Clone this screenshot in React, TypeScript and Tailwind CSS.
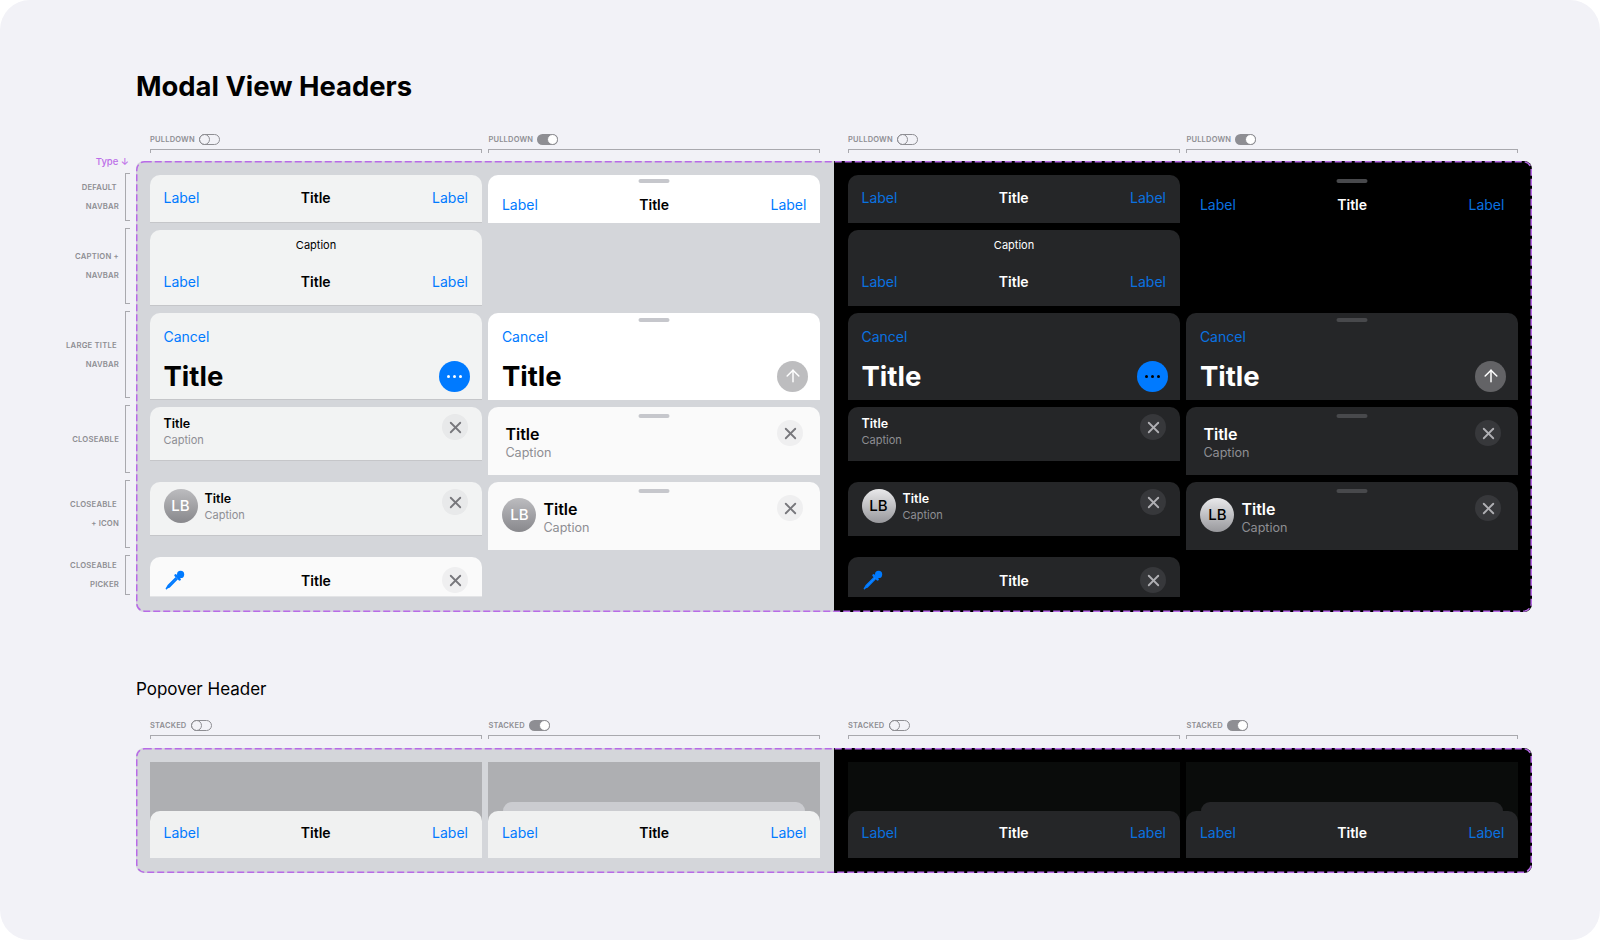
import { ArrowUp, X } from "lucide-react";
import type { ReactNode } from "react";

const rowLabels = [
  { lines: ["DEFAULT ", "NAVBAR"], box: "h-[48px]" },
  { lines: ["CAPTION +", "NAVBAR"], box: "h-[76px]" },
  { lines: ["LARGE TITLE ", "NAVBAR"], box: "h-[87px]" },
  { lines: ["CLOSEABLE"], box: "h-[68px]" },
  { lines: ["CLOSEABLE ", "+ ICON"], box: "h-[68px]" },
  { lines: ["CLOSEABLE ", "PICKER"], box: "h-[40px]" },
];

const theme = (dark: boolean) => ({
  flat: dark ? "bg-[#252628]" : "bg-[#f2f3f3] border-b border-[#c5c6c9]",
  white: dark ? "bg-[#252628]" : "bg-white",
  soft: dark ? "bg-[#252628]" : "bg-[#fafafa]",
  picker: dark ? "bg-[#252628]" : "bg-[#fafafa] border-b border-[#e3e4e6]",
  plain: dark ? "bg-black" : "bg-white",
  link: dark ? "text-[#0a72e0]" : "text-[#007aff]",
  title: dark ? "text-white" : "text-black",
  caption: "text-[#8e8e93]",
  grabber: dark ? "bg-[#48494c]" : "bg-[#c6c7cc]",
  close: dark ? "bg-[#37383b] text-[#b0b0b4]" : "bg-[#78788014] text-[#77777c]",
  arrow: dark ? "bg-[#636366]" : "bg-[#bdbdbf]",
  dots: dark ? "bg-black" : "bg-white",
  avatar: dark
    ? "bg-[linear-gradient(180deg,#e9e9eb,#98989c)] text-black"
    : "bg-[linear-gradient(180deg,#bcbcbf,#88888c)] text-white",
});

type Tone = ReturnType<typeof theme>;

const Toggle = ({ on }: { on?: boolean }) =>
  on ? (
    <span className="flex h-[11px] w-[21px] justify-end rounded-full bg-[#8e8e93]">
      <span className="h-[11px] w-[11px] rounded-full border border-[#8e8e93] bg-white" />
    </span>
  ) : (
    <span className="flex h-[11px] w-[21px] rounded-full border border-[#8e8e93]">
      <span className="-my-px -ml-px h-[11px] w-[11px] rounded-full border border-[#8e8e93]" />
    </span>
  );

const ColumnHead = ({ label, on }: { label: string; on?: boolean }) => (
  <div>
    <div className="flex h-[11px] items-center gap-[4px]">
      <span className="text-[7.5px] font-semibold tracking-[0.2px] text-[#8e8e93]">{label}</span>
      <Toggle on={on} />
    </div>
    <div className="mt-[4px] h-[4px] border-x border-t border-[#a9a9ae]" />
  </div>
);

const ColumnHeads = ({ label }: { label: string }) => (
  <div className="flex">
    {[0, 1].map((half) => (
      <div key={half} className="grid w-[698px] grid-cols-[332px_332px] gap-x-[6.4px] px-[14px]">
        <ColumnHead label={label} />
        <ColumnHead label={label} on />
      </div>
    ))}
  </div>
);

const Grabber = ({ tone, top }: { tone: Tone; top: string }) => (
  <div className={`absolute left-1/2 h-[4px] w-[31px] -translate-x-1/2 rounded-full ${top} ${tone.grabber}`} />
);

const Close = ({ tone, place }: { tone: Tone; place: string }) => (
  <button className={`absolute flex h-[26px] w-[26px] items-center justify-center rounded-full ${place} ${tone.close}`}>
    <X size={19} strokeWidth={2.3} />
  </button>
);

const NavRow = ({ tone, pad }: { tone: Tone; pad?: string }) => (
  <div className={`grid grid-cols-3 items-center pl-[13.5px] pr-[14px] text-[14px] leading-[20px] ${pad ?? ""}`}>
    <span className={tone.link}>Label</span>
    <span className={`text-center font-semibold ${tone.title}`}>Title</span>
    <span className={`text-right ${tone.link}`}>Label</span>
  </div>
);

const Card = ({ className, children }: { className: string; children: ReactNode }) => (
  <div className={`relative self-start rounded-t-[10px] ${className}`}>{children}</div>
);

const Avatar = ({ tone }: { tone: Tone }) => (
  <div className={`flex h-[34px] w-[34px] shrink-0 items-center justify-center rounded-full text-[15px] font-medium ${tone.avatar}`}>
    LB
  </div>
);

const Dropper = () => (
  <svg width="20" height="20" viewBox="0 0 20 20" className="text-[#007aff]">
    <circle cx="15.6" cy="4.4" r="3.6" fill="currentColor" />
    <path d="M10.6 5.4l4 4" stroke="currentColor" strokeWidth="2.6" strokeLinecap="round" />
    <path d="M11.2 7.6L3.4 15.4c-.6.6-1 2-2 3.2 1.2-1 2.6-1.4 3.2-2l7.8-7.8" fill="#78b4ff" stroke="currentColor" strokeWidth="1.5" strokeLinejoin="round" />
  </svg>
);

const Panel = ({ dark }: { dark: boolean }) => {
  const tone = theme(dark);
  return (
    <div className="grid h-[436px] grid-cols-[332px_332px] grid-rows-[48px_76px_87px_68px_68px_40px] gap-x-[6.4px] gap-y-[7px]">
      {/* default navbar */}
      <Card className={`h-[48px] pt-[13px] ${tone.flat}`}>
        <NavRow tone={tone} />
      </Card>
      <Card className={`h-[48px] pt-[20px] ${tone.plain}`}>
        <Grabber tone={tone} top="top-[4px]" />
        <NavRow tone={tone} />
      </Card>

      {/* caption + navbar */}
      <Card className={`h-[76px] pt-[8px] ${tone.flat}`}>
        <p className={`text-center text-[11px] leading-[14px] ${tone.title}`}>Caption</p>
        <NavRow tone={tone} pad="mt-[20px]" />
      </Card>
      <div />

      {/* large title */}
      {[false, true].map((pulldown) => (
        <Card key={String(pulldown)} className={`h-[87px] pt-[14px] ${pulldown ? tone.white : tone.flat}`}>
          {pulldown && <Grabber tone={tone} top="top-[5px]" />}
          <p className={`pl-[13.5px] text-[14px] leading-[20px] ${tone.link}`}>Cancel</p>
          <div className="mt-[11px] flex items-center justify-between pl-[13.5px] pr-[12px]">
            <span className={`text-[27.5px] font-bold leading-[36px] ${tone.title}`}>Title</span>
            {pulldown ? (
              <span className={`flex h-[31px] w-[31px] items-center justify-center rounded-full text-white ${tone.arrow}`}>
                <ArrowUp size={20} strokeWidth={1.8} />
              </span>
            ) : (
              <span className="flex h-[31px] w-[31px] items-center justify-center gap-[3px] rounded-full bg-[#007aff]">
                <i className={`h-[3px] w-[3px] rounded-full ${tone.dots}`} />
                <i className={`h-[3px] w-[3px] rounded-full ${tone.dots}`} />
                <i className={`h-[3px] w-[3px] rounded-full ${tone.dots}`} />
              </span>
            )}
          </div>
        </Card>
      ))}

      {/* closeable */}
      <Card className={`h-[54px] pl-[13.5px] pt-[8px] ${tone.flat}`}>
        <Close tone={tone} place="right-[14px] top-[7px]" />
        <p className={`text-[12.5px] font-semibold leading-[18px] ${tone.title}`}>Title</p>
        <p className={`text-[11px] leading-[15px] ${tone.caption}`}>Caption</p>
      </Card>
      <Card className={`h-[68px] pl-[17px] pt-[16px] ${tone.soft}`}>
        <Grabber tone={tone} top="top-[7px]" />
        <Close tone={tone} place="right-[17px] top-[13px]" />
        <p className={`text-[16px] font-semibold leading-[22px] ${tone.title}`}>Title</p>
        <p className={`text-[12.6px] leading-[16px] ${tone.caption}`}>Caption</p>
      </Card>

      {/* closeable + icon */}
      <Card className={`flex h-[54px] gap-[7px] pl-[13.5px] pt-[7px] ${tone.flat}`}>
        <Close tone={tone} place="right-[14px] top-[7px]" />
        <Avatar tone={tone} />
        <div className="mt-[1px]">
          <p className={`text-[12.5px] font-semibold leading-[18px] ${tone.title}`}>Title</p>
          <p className={`text-[11px] leading-[15px] ${tone.caption}`}>Caption</p>
        </div>
      </Card>
      <Card className={`flex h-[68px] gap-[7px] pl-[14px] pt-[16px] ${tone.soft}`}>
        <Grabber tone={tone} top="top-[7px]" />
        <Close tone={tone} place="right-[17px] top-[13px]" />
        <Avatar tone={tone} />
        <div>
          <p className={`text-[16px] font-semibold leading-[22px] ${tone.title}`}>Title</p>
          <p className={`text-[12.6px] leading-[15px] ${tone.caption}`}>Caption</p>
        </div>
      </Card>

      {/* closeable picker */}
      <Card className={`flex h-[40px] items-center justify-center pt-[7px] ${tone.picker}`}>
        <div className="absolute left-[15px] top-[13px]">
          <Dropper />
        </div>
        <span className={`text-[14px] font-semibold ${tone.title}`}>Title</span>
        <Close tone={tone} place="right-[14px] top-[10px]" />
      </Card>
    </div>
  );
};

const PopoverCell = ({ dark, stacked }: { dark: boolean; stacked?: boolean }) => {
  const tone = theme(dark);
  return (
    <div className={`flex h-[96px] flex-col justify-end ${dark ? "bg-[#0a0c0b]" : "bg-[#aeafb2]"}`}>
      {stacked && <div className={`mx-[15px] h-[9px] rounded-t-[10px] ${dark ? "bg-[#252628]" : "bg-[#cbccd0]"}`} />}
      <div className={`h-[47px] rounded-t-[10px] pt-[12px] ${dark ? "bg-[#252628]" : "bg-[#f0f1f1]"}`}>
        <NavRow tone={tone} />
      </div>
    </div>
  );
};

const Dashes = ({ height }: { height: number }) => (
  <svg className="pointer-events-none absolute inset-0" width="1396" height={height} fill="none">
    <rect x="0.75" y="0.75" width="1394.5" height={height - 1.5} rx="8" stroke="#b86ae8" strokeWidth="1.5" strokeDasharray="7 3" />
  </svg>
);

export default function App() {
  return (
    <div className="h-[940px] w-[1600px] overflow-hidden bg-white [font-family:Inter,sans-serif]">
      <div className="h-[940px] rounded-[30px] bg-[#f2f2f7] pt-[69px]">
        <h1 className="pl-[136px] text-[27.4px] font-bold leading-[35px] text-black">Modal View Headers</h1>

        <div className="ml-[136px] mt-[30px]">
          <ColumnHeads label="PULLDOWN" />
        </div>

        <div className="mt-[8px] flex">
          <aside className="-mt-[5px] w-[136px] pr-[6px]">
            <p className="pr-[1px] text-right text-[9.5px] font-medium leading-[12px] text-[#bc6ee8]">Type ↓</p>
            <div className="mt-[5px] flex flex-col gap-[7px]">
              {rowLabels.map((row) => (
                <div key={row.lines.join()} className={`flex ${row.box}`}>
                  <div className="flex flex-1 flex-col items-end justify-center pr-[6px] pt-[2px] text-[7.7px] font-semibold leading-[18.7px] tracking-[0.2px] text-[#8e8e93]">
                    {row.lines.map((line) => (
                      <span key={line} className="whitespace-pre">
                        {line}
                      </span>
                    ))}
                  </div>
                  <div className="w-[5px] border-y border-l border-[#a9a9ae]" />
                </div>
              ))}
            </div>
          </aside>

          <section className="relative flex h-[451px] w-[1396px]">
            <div className="w-[698px] rounded-l-[8px] bg-[#d4d6da] p-[14px]">
              <Panel dark={false} />
            </div>
            <div className="w-[698px] rounded-r-[8px] bg-black p-[14px]">
              <Panel dark />
            </div>
            <Dashes height={451} />
          </section>
        </div>

        <h2 className="mt-[64px] pl-[136px] text-[17px] leading-[26px] text-black">Popover Header</h2>

        <div className="ml-[136px] mt-[18px]">
          <ColumnHeads label="STACKED" />
        </div>

        <section className="relative ml-[136px] mt-[9px] flex h-[125px] w-[1396px]">
          <div className="grid w-[698px] grid-cols-[332px_332px] gap-x-[6.4px] rounded-l-[8px] bg-[#d4d6da] p-[14px]">
            <PopoverCell dark={false} />
            <PopoverCell dark={false} stacked />
          </div>
          <div className="grid w-[698px] grid-cols-[332px_332px] gap-x-[6.4px] rounded-r-[8px] bg-black p-[14px]">
            <PopoverCell dark />
            <PopoverCell dark stacked />
          </div>
          <Dashes height={125} />
        </section>
      </div>
    </div>
  );
}
